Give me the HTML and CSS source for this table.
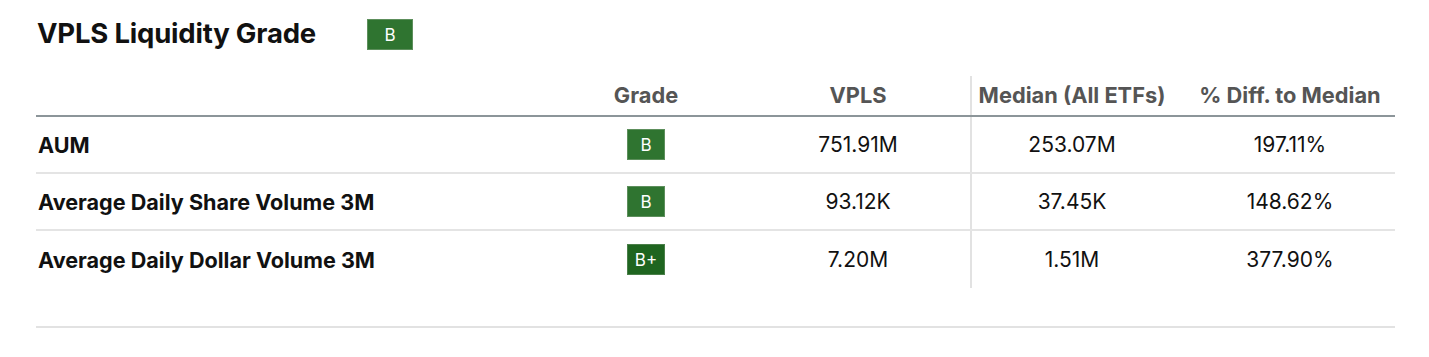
FILE: index.html
```html
<!DOCTYPE html>
<html>
<head>
<meta charset="utf-8">
<link rel="stylesheet" href="styles.css">
</head>
<body>
<section class="panel">
  <header class="title-row">
    <h2 class="title">VPLS Liquidity Grade</h2>
    <span class="grade grade-top">B</span>
  </header>
  <div class="table">
    <div class="row head">
      <div class="cell label"></div>
      <div class="cell">Grade</div>
      <div class="cell">VPLS</div>
      <div class="cell divider">Median (All ETFs)</div>
      <div class="cell last">% Diff. to Median</div>
    </div>
    <div class="row">
      <div class="cell label">AUM</div>
      <div class="cell"><span class="grade">B</span></div>
      <div class="cell">751.91M</div>
      <div class="cell divider">253.07M</div>
      <div class="cell last">197.11%</div>
    </div>
    <div class="row">
      <div class="cell label">Average Daily Share Volume 3M</div>
      <div class="cell"><span class="grade">B</span></div>
      <div class="cell">93.12K</div>
      <div class="cell divider">37.45K</div>
      <div class="cell last">148.62%</div>
    </div>
    <div class="row final">
      <div class="cell label">Average Daily Dollar Volume 3M</div>
      <div class="cell"><span class="grade dark">B+</span></div>
      <div class="cell">7.20M</div>
      <div class="cell divider">1.51M</div>
      <div class="cell last">377.90%</div>
    </div>
  </div>
  <hr class="rule">
</section>
</body>
</html>
```
FILE: styles.css
```css
html, body {
  margin: 0;
  padding: 0;
  background: #fff;
}
body {
  font-family: Inter, "Liberation Sans", sans-serif;
  color: #111;
}
.panel {
  width: 1359px;
  margin-left: 36px;
  padding-top: 19px;
}
.title-row {
  display: flex;
  align-items: center;
  height: 31px;
}
.title {
  margin: 0 0 3px;
  font-size: 27.5px;
  font-weight: 700;
  letter-spacing: -0.2px;
  width: 330px;
  padding-left: 1px;
}
.grade {
  display: inline-flex;
  align-items: center;
  justify-content: center;
  background: #2f7430;
  color: #fff;
  font-size: 17px;
  font-weight: 400;
  width: 38px;
  height: 31px;
  box-sizing: border-box;
  border: 1px solid #5d8f5c;
}
.grade.dark {
  background: #1f6520;
  border-color: #4a7f49;
}
.grade-top {
  width: 46px;
  height: 31px;
  font-size: 17px;
}
.table {
  margin-top: 26px;
}
.row {
  display: grid;
  grid-template-columns: 510px 200px 224px 202px 223px;
  height: 57px;
  border-bottom: 2px solid #e4e4e4;
  box-sizing: border-box;
}
.row.head {
  height: 41px;
  border-bottom: 2px solid #8c9599;
  font-weight: 700;
  color: #555;
}
.row.final {
  border-bottom: none;
}
.cell {
  display: flex;
  align-items: center;
  justify-content: center;
  font-size: 21px;
  white-space: nowrap;
}
.row.head .cell {
  font-size: 21.8px;
  padding-bottom: 2px;
}
.cell.label {
  justify-content: flex-start;
  padding-left: 2px;
  font-weight: 700;
  font-size: 21.6px;
  color: #111;
}
.cell.divider {
  border-left: 2px solid #e2e2e2;
}
.cell.last {
  padding-left: 13px;
}
.rule {
  margin: 38px 0 0;
  border: none;
  border-top: 2px solid #e2e2e2;
}
```
